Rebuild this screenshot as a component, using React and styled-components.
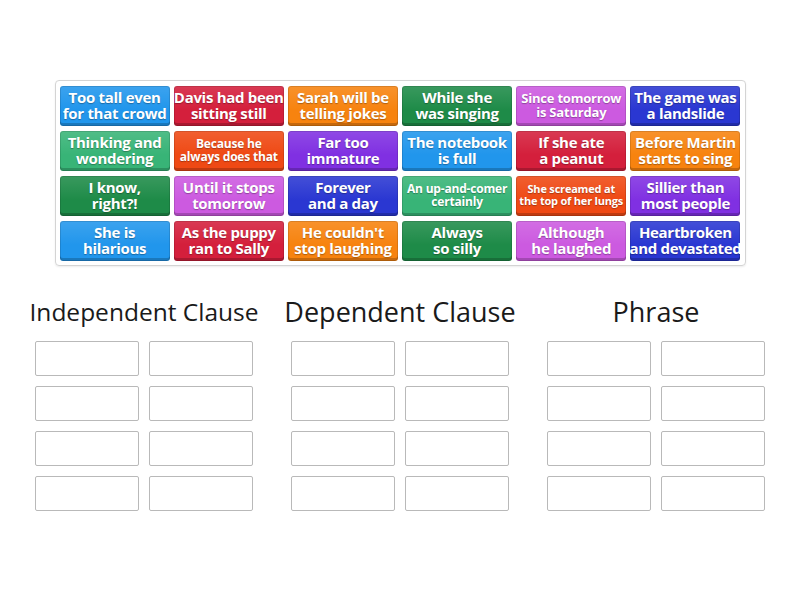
import React from 'react'
import styled, { createGlobalStyle } from 'styled-components';

const GlobalStyle = createGlobalStyle`
  body {
    margin: 0;
    background: #ffffff;
    font-family: "Open Sans", "Noto Sans", sans-serif;
  }
`;

const colors = {
  blue: '#2196ec',
  red: '#d41f3c',
  orange: '#f7830f',
  dgreen: '#1e8b48',
  orchid: '#cc5ae0',
  dblue: '#2a37d2',
  teal: '#38b477',
  rorange: '#ef4914',
  purple: '#8030e2',
};

// text lines, colour key, font size (default 15)
const tiles = [
  [['Too tall even', 'for that crowd'], 'blue'],
  [['Davis had been', 'sitting still'], 'red'],
  [['Sarah will be', 'telling jokes'], 'orange'],
  [['While she', 'was singing'], 'dgreen'],
  [['Since tomorrow', 'is Saturday'], 'orchid', 13],
  [['The game was', 'a landslide'], 'dblue'],
  [['Thinking and', 'wondering'], 'teal'],
  [['Because he', 'always does that'], 'rorange', 12],
  [['Far too', 'immature'], 'purple'],
  [['The notebook', 'is full'], 'blue'],
  [['If she ate', 'a peanut'], 'red'],
  [['Before Martin', 'starts to sing'], 'orange'],
  [['I know,', 'right?!'], 'dgreen'],
  [['Until it stops', 'tomorrow'], 'orchid'],
  [['Forever', 'and a day'], 'dblue'],
  [['An up-and-comer', 'certainly'], 'teal', 12],
  [['She screamed at', 'the top of her lungs'], 'rorange', 11],
  [['Sillier than', 'most people'], 'purple'],
  [['She is', 'hilarious'], 'blue'],
  [['As the puppy', 'ran to Sally'], 'red'],
  [["He couldn't", 'stop laughing'], 'orange'],
  [['Always', 'so silly'], 'dgreen'],
  [['Although', 'he laughed'], 'orchid'],
  [['Heartbroken', 'and devastated'], 'dblue'],
];

const groups = [
  ['Independent Clause', 24.5],
  ['Dependent Clause', 27],
  ['Phrase', 27],
];

const Page = styled.div`
  width: 800px;
  padding-top: 80px;
  display: flex;
  flex-direction: column;
  align-items: center;
`;

const Bank = styled.div`
  width: 691px;
  box-sizing: border-box;
  border: 1px solid #d4d4d4;
  border-radius: 4px;
  box-shadow: 0 1px 2px rgba(0, 0, 0, 0.08);
  padding: 5px 4px 4px;
  display: grid;
  grid-template-columns: repeat(6, 1fr);
  grid-auto-rows: 40px;
  column-gap: 4px;
  row-gap: 5px;
`;

const Tile = styled.div`
  background: ${p => p.$bg};
  background-image: linear-gradient(rgba(255, 255, 255, 0.12), rgba(255, 255, 255, 0) 60%);
  border-radius: 3px;
  box-shadow: inset 0 -3px 0 rgba(0, 0, 0, 0.2), inset 0 0 0 1px rgba(0, 0, 0, 0.12);
  color: #fff;
  font-weight: 700;
  font-size: ${p => p.$size}px;
  line-height: ${p => Math.round(p.$size * 1.08)}px;
  letter-spacing: ${p => (p.$size >= 15 ? '-0.3px' : '-0.2px')};
  text-align: center;
  text-shadow: 0 1px 1px rgba(0, 0, 0, 0.3);
  display: flex;
  flex-direction: column;
  align-items: center;
  justify-content: center;
  padding-bottom: 2px;
  white-space: nowrap;
  overflow: hidden;
`;

const Targets = styled.div`
  margin-top: 23px;
  display: grid;
  grid-template-columns: repeat(3, 256px);
`;

const Group = styled.div`
  display: flex;
  flex-direction: column;
  align-items: center;
`;

const Heading = styled.div`
  height: 44px;
  display: flex;
  align-items: center;
  font-size: ${p => p.$size}px;
  color: #1a1a1a;
  font-weight: 400;
  white-space: nowrap;
`;

const Slots = styled.div`
  margin-top: 8px;
  display: grid;
  grid-template-columns: repeat(2, 104px);
  grid-auto-rows: 35px;
  column-gap: 10px;
  row-gap: 10px;
`;

const Slot = styled.div`
  box-sizing: border-box;
  border: 1px solid #b9b9b9;
  border-radius: 2px;
  background: #fff;
`;

export default function App() {
  return (
    <Page>
      <GlobalStyle />
      <Bank>
        {tiles.map(([lines, color, size]) => (
          <Tile key={lines.join(' ')} $bg={colors[color]} $size={size || 15}>
            {lines.map(line => <span key={line}>{line}</span>)}
          </Tile>
        ))}
      </Bank>
      <Targets>
        {groups.map(([title, size]) => (
          <Group key={title}>
            <Heading $size={size}>{title}</Heading>
            <Slots>
              {Array.from({ length: 8 }).map((_, i) => <Slot key={i} />)}
            </Slots>
          </Group>
        ))}
      </Targets>
    </Page>
  );
}
